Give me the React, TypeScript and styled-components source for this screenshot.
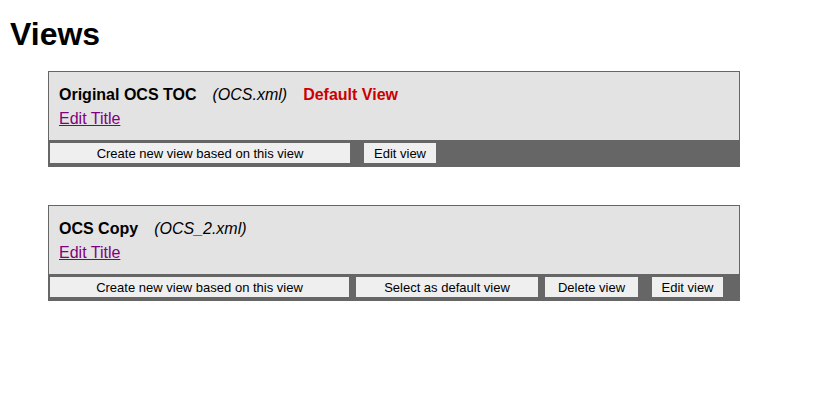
import * as React from "react";
import styled, { createGlobalStyle } from "styled-components";

interface ViewData {
  title: string;
  file: string;
  isDefault: boolean;
  actions: { label: string; width: number; gap: number }[];
}

const views: ViewData[] = [
  {
    title: "Original OCS TOC",
    file: "(OCS.xml)",
    isDefault: true,
    actions: [
      { label: "Create new view based on this view", width: 300, gap: 1 },
      { label: "Edit view", width: 72, gap: 14 },
    ],
  },
  {
    title: "OCS Copy",
    file: "(OCS_2.xml)",
    isDefault: false,
    actions: [
      { label: "Create new view based on this view", width: 299, gap: 1 },
      { label: "Select as default view", width: 182, gap: 7 },
      { label: "Delete view", width: 93, gap: 7 },
      { label: "Edit view", width: 71, gap: 14 },
    ],
  },
];

const App = () => {
  return (
    <>
      <GlobalStyle />
      <Main>
        <Heading>Views</Heading>
        <List>
          {views.map((v) => (
            <Card key={v.file}>
              <CardHead>
                <TitleRow>
                  <Title>{v.title}</Title>
                  <FileName>{v.file}</FileName>
                  {v.isDefault && <DefaultTag>Default View</DefaultTag>}
                </TitleRow>
                <EditLink href="#">Edit Title</EditLink>
              </CardHead>
              <ActionBar>
                {v.actions.map((a) => (
                  <ActionButton key={a.label} $width={a.width} $gap={a.gap}>
                    {a.label}
                  </ActionButton>
                ))}
              </ActionBar>
            </Card>
          ))}
        </List>
      </Main>
      <Footer />
    </>
  );
};

const GlobalStyle = createGlobalStyle`
  body {
    margin: 0;
    background: #fff;
    font-family: "Liberation Sans", Arial, sans-serif;
    color: #000;
  }
`;

const Main = styled.div`
  min-height: 392px;
  padding: 0 10px;
  box-sizing: border-box;
`;

const Heading = styled.h1`
  margin: 16px 0 18px;
  font-size: 32px;
  line-height: 37px;
  font-weight: bold;
`;

const List = styled.div`
  display: flex;
  flex-direction: column;
  gap: 38px;
  margin-left: 38px;
`;

const Card = styled.div`
  width: 692px;
  box-sizing: border-box;
  border: 1px solid #666;
  background: #e3e3e3;
`;

const CardHead = styled.div`
  padding: 14px 10px 12px 10px;
  display: flex;
  flex-direction: column;
  gap: 6px;
`;

const TitleRow = styled.div`
  display: flex;
  gap: 16px;
  font-size: 16px;
  line-height: 18px;
`;

const Title = styled.span`
  font-weight: bold;
`;

const FileName = styled.span`
  font-style: italic;
`;

const DefaultTag = styled.span`
  font-weight: bold;
  color: #cc0000;
`;

const EditLink = styled.a`
  font-size: 16px;
  line-height: 18px;
  color: #800080;
  text-decoration: underline;
  align-self: flex-start;
`;

const ActionBar = styled.div`
  display: flex;
  background: #666;
  padding: 3px 0 3px;
`;

const ActionButton = styled.button<{ $width: number; $gap: number }>`
  width: ${(p) => p.$width}px;
  margin-left: ${(p) => p.$gap}px;
  height: 20px;
  padding: 0;
  border: none;
  background: #efefef;
  font-family: "Liberation Sans", Arial, sans-serif;
  font-size: 13px;
  color: #000;
  text-align: center;
  cursor: pointer;
`;

const Footer = styled.div`
  border-top: 1px solid #edf0de;
`;

export default App;
